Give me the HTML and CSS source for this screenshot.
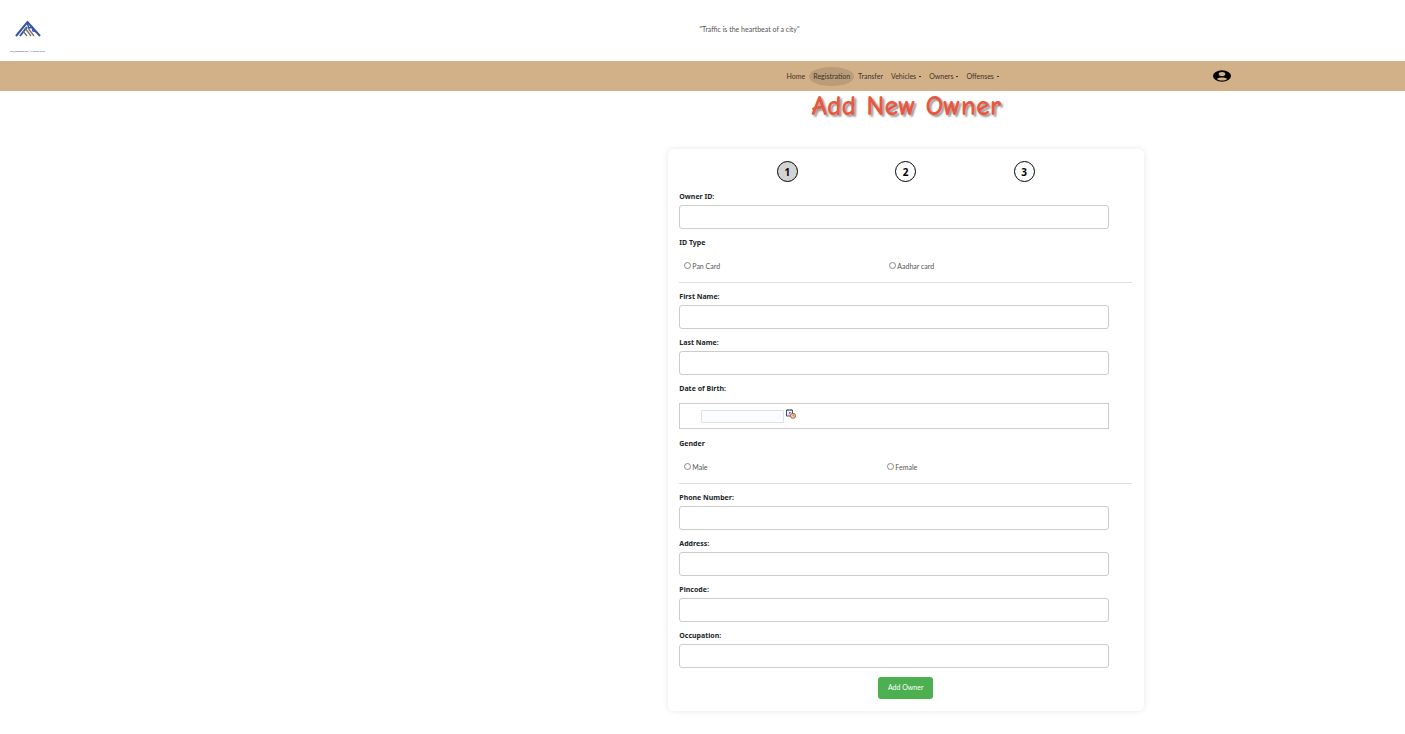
FILE: index.html
```html
<!DOCTYPE html>
<html lang="en">
<head>
<meta charset="utf-8">
<title>Add New Owner</title>
<link rel="stylesheet" href="styles.css">
</head>
<body>
<header class="top">
  <div class="brand">
    <svg class="logo" viewBox="0 0 26 17" aria-hidden="true">
      <path d="M1 16 12.500 2 25 16M5 16 12 7" fill="none" stroke="#3555a5" stroke-width="2"/>
      <path d="m12 3 2 5 3-1 1 4 4 1" fill="none" stroke="#3555a5" stroke-width="1.500"/>
      <path d="m8 11 4 5m-2-8 6 8m-3-8 6 8" fill="none" stroke="#77736c" stroke-width="1.300"/>
    </svg>
    <span class="contact">info@trafficdept.com | +919876543210</span>
  </div>
  <p class="quote">"Traffic is the heartbeat of a city"</p>
</header>
<nav class="nav">
  <a href="#">Home</a>
  <a href="#" class="active">Registration</a>
  <a href="#">Transfer</a>
  <a href="#" class="drop">Vehicles</a>
  <a href="#" class="drop">Owners</a>
  <a href="#" class="drop">Offenses</a>
  <button class="profile" aria-label="Profile">
    <svg viewBox="0 0 18 12"><ellipse cx="9" cy="6" rx="9" ry="5.800"/><ellipse cx="9" cy="4" rx="3.300" ry="2" fill="#d2b088"/><path d="M4 9C5 7 13 7 14 9 12 11 6 11 4 9Z" fill="#d2b088"/></svg>
  </button>
</nav>
<main class="main">
  <h1 class="title">Add New Owner</h1>
  <form class="card">
    <ol class="steps"><li class="step current">1</li><li class="step">2</li><li class="step">3</li></ol>
    <div class="field"><label for="oid">Owner ID:</label><input id="oid" type="text"></div>
    <fieldset class="choice">
      <legend>ID Type</legend>
      <div class="options">
        <label><input type="radio" name="idtype">Pan Card</label>
        <label><input type="radio" name="idtype">Aadhar card</label>
      </div>
    </fieldset>
    <div class="field"><label for="first">First Name:</label><input id="first" type="text"></div>
    <div class="field"><label for="last">Last Name:</label><input id="last" type="text"></div>
    <div class="field"><label for="dob">Date of Birth:</label>
      <div class="datebox"><input id="dob" type="text">
        <button type="button" class="pick" aria-label="Choose date">
          <svg viewBox="0 0 10 10"><path d="M.5 1h6v6h-6z" fill="#eef0fa" stroke="#4d4d70"/><path d="M2 0v2M5 0v2M3 3.500h1.500L3 5.500" fill="none" stroke="#4d4d70" stroke-width=".8"/><circle cx="7" cy="6.800" r="2.500" fill="#ffe0b8" stroke="#a5573d"/><path d="M7 5v2h1.500" fill="none" stroke="#a5573d" stroke-width=".7"/></svg>
        </button>
      </div>
    </div>
    <fieldset class="choice">
      <legend>Gender</legend>
      <div class="options gender">
        <label><input type="radio" name="gender">Male</label>
        <label><input type="radio" name="gender">Female</label>
      </div>
    </fieldset>
    <div class="field"><label for="phone">Phone Number:</label><input id="phone" type="text"></div>
    <div class="field"><label for="address">Address:</label><input id="address" type="text"></div>
    <div class="field"><label for="pin">Pincode:</label><input id="pin" type="text"></div>
    <div class="field"><label for="job">Occupation:</label><input id="job" type="text"></div>
    <button type="button" class="submit">Add Owner</button>
  </form>
</main>
</body>
</html>
```
FILE: styles.css
```css
* { box-sizing: border-box; }
body { margin: 0; background: #fff; color: #212529; font: 7px/16px "Lato", "Noto Sans", sans-serif; }
button, input { font: inherit; }
.top { display: flex; align-items: center; height: 61px; }
.brand { display: flex; flex-direction: column; align-items: flex-start; width: 94px; padding: 20px 0 4px 10px; gap: 9px; }
.logo { width: 26px; height: 17px; margin-left: 5px; }
.contact { font-size: 2px; line-height: 11px; color: #446; }
.quote { flex: 1; margin: 0; padding-bottom: 3px; text-align: center; color: #555; }
.nav { display: flex; align-items: center; height: 30px; padding: 0 12.4% 0 55.700%; background: #d2b088; }
.nav a { display: flex; align-items: center; height: 19px; padding: 0 4px; color: #3c342a; text-decoration: none; }
.nav .active { border-radius: 50%; background: #b99c78; }
.drop::after { content: ""; width: 2px; height: 1px; margin-left: 3px; background: #3c342a; }
.profile { display: flex; margin-left: auto; padding: 0; border: 0; background: none; }
.profile svg { width: 18px; height: 12px; }
.main { display: flex; flex-direction: column; align-items: center; margin-left: 29%; padding-bottom: 22px; }
.title { margin: 0 0 28px; color: #e9573f; font: bold 28px/30px "Comic Sans MS", "Comic Neue", "Lato", sans-serif; text-shadow: 2px 2px 2px #999; }
.card { display: flex; flex-direction: column; gap: 5px; width: 47.700%; padding: 12px 12px 12px 11px; border-radius: 6px; box-shadow: 0 0 6px #0000001a; }
.steps { display: flex; justify-content: space-evenly; height: 22px; margin: 0; padding: 0; list-style: none; }
.step { display: flex; align-items: center; justify-content: center; width: 21px; height: 21px; border: 1px solid #000; border-radius: 50%; color: #000; font: bold 10px "Noto Sans", sans-serif; }
.current { background: #d3d3d3; }
.field { display: flex; flex-direction: column; width: 95%; }
.field > label, legend { font-family: "Noto Sans", sans-serif; font-weight: bold; line-height: 16px; padding: 1px 0 0; }
.field > input { width: 100%; height: 24px; padding: 4px 8px; border: 1px solid #ccc; border-radius: 3px; background: #fff; }
.choice { margin: 0; padding: 0; border: 0; border-bottom: 1px solid #ddd; }
.options { display: grid; grid-template-columns: 205px 1fr; padding: 7px 5px 8px; color: #555; }
.gender { grid-template-columns: 203px 1fr; }
.options label { display: flex; align-items: center; }
.options input { appearance: none; width: 7px; height: 7px; margin: 0 1px 1px 0; border: 1px solid #888; border-radius: 50%; background: #fff; }
.options input:checked { background: #555; }
.datebox { display: flex; align-items: center; gap: 2px; height: 26px; margin: 6px 0 1px; padding-left: 21px; border: 1px solid #ccc; }
.datebox input { width: 83px; height: 13px; padding: 1px 4px; border: 1px solid #dbe3ea; border-radius: 1px; background: #f9fdff; }
.pick { display: flex; padding: 0 0 4px; border: 0; background: none; }
.pick svg { width: 10px; height: 10px; }
.submit { align-self: center; margin-top: 4px; padding: 2px 10px 4px; border: 0; border-radius: 3px; background: #4caf50; color: #fff; line-height: 16px; }
```
